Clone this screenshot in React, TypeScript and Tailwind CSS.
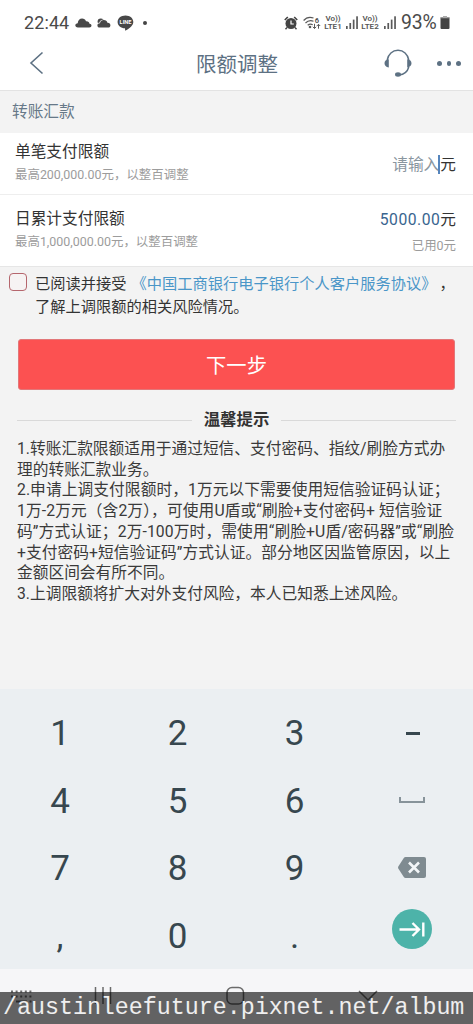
import React from 'react';

const notes = [
  { text: '1.转账汇款限额适用于通过短信、支付密码、指纹/刷脸方式办', spacing: '' },
  { text: '理的转账汇款业务。', spacing: '' },
  { text: '2.申请上调支付限额时，1万元以下需要使用短信验证码认证；', spacing: 'tracking-[0.07px]' },
  { text: '1万-2万元（含2万），可使用U盾或“刷脸+支付密码+ 短信验证', spacing: 'tracking-[0.1px]' },
  { text: '码”方式认证；2万-100万时，需使用“刷脸+U盾/密码器”或“刷脸', spacing: 'tracking-[0.11px]' },
  { text: '+支付密码+短信验证码”方式认证。部分地区因监管原因，以上', spacing: 'tracking-[0.04px]' },
  { text: '金额区间会有所不同。', spacing: '' },
  { text: '3.上调限额将扩大对外支付风险，本人已知悉上述风险。', spacing: '' },
];

function Signal() {
  return (
    <svg className="h-[13px] w-[12px]" viewBox="0 0 12 13" fill="#5a5a5a">
      <rect x="0" y="10" width="1.7" height="3" />
      <rect x="3.4" y="7" width="1.7" height="6" />
      <rect x="6.8" y="3.6" width="1.7" height="9.4" />
      <rect x="10.2" y="0.3" width="1.7" height="12.7" />
    </svg>
  );
}

function VoLte({ n }: { n: number }) {
  return (
    <div className="flex w-[18px] flex-col items-center text-[8px] leading-[8px] font-semibold text-[#555]">
      <span className="whitespace-nowrap">Vo))</span>
      <span className="whitespace-nowrap">LTE{n}</span>
    </div>
  );
}

function StatusBar() {
  return (
    <div className="flex h-[45px] items-center pl-6 text-[#4a4a4a]">
      <span className="w-[46px] text-[18px] leading-none tracking-[0.1px]">22:44</span>
      <svg className="ml-[5px] h-[10px] w-[17px]" viewBox="0 0 17 10" fill="#484848">
        <path d="M3 9.500C1.200 9.500 .300 8.500 .300 7.300C.300 6.100 1.300 5.300 2.700 5.200C3 2.200 4.700 .400 7.100 .400C9 .400 10.400 1.400 11 3.200C13.200 3 14.300 4.200 14.500 5.700C15.800 5.800 16.500 6.600 16.500 7.600C16.500 8.800 15.600 9.500 14.300 9.500Z" />
      </svg>
      <svg className="ml-[5px] h-[10px] w-[14px]" viewBox="0 0 14 10">
        <circle cx="3.800" cy="3.600" r="3.200" fill="#484848" />
        <path d="M2.700 9.500C1.200 9.500 .4 8.600 .4 7.400C.4 6 1.400 5.100 3 5.200C3.300 3.200 4.800 2.100 6.800 2.100C8.800 2.100 10 3.200 10.400 4.800C12.200 4.600 13.400 5.600 13.400 7.200C13.400 8.600 12.500 9.500 11.200 9.500Z" fill="#484848" stroke="#fff" strokeWidth="1.400" paintOrder="stroke" />
      </svg>
      <svg className="ml-[6px] h-[16px] w-[17px]" viewBox="0 0 17 16">
        <path d="M8.500 .4C13 .4 16.300 3.200 16.300 6.900C16.300 10.300 12.800 13 8.600 15.600C7.900 15.900 8.200 14.600 8 13.300C3.900 13.100 .6 10.400 .6 6.900C.6 3.200 4 .4 8.500 .4Z" fill="#484848" />
        <text x="8.500" y="9.200" fill="#fff" fontSize="5.600" fontWeight="700" textAnchor="middle" fontFamily="Roboto, sans-serif">LINE</text>
      </svg>
      <span className="ml-[9px] h-1 w-1 rounded-full bg-[#444]" />

      <svg className="ml-[137px] h-[14px] w-[14px]" viewBox="0 0 14 14">
        <path d="M.8 4L3.800 1M13.200 4L10.200 1" stroke="#444" strokeWidth="1.700" />
        <circle cx="7" cy="7.500" r="5.500" fill="#444" />
        <path d="M3 11.500L1.500 13.200M11 11.500L12.500 13.200" stroke="#444" strokeWidth="1.400" />
        <path d="M7 4.500V8H9.800" fill="none" stroke="#fff" strokeWidth="1.200" />
      </svg>
      <svg className="ml-[5px] h-[14px] w-[18px]" viewBox="0 0 18 14" fill="none" stroke="#5a5a5a" strokeWidth="1.200">
        <path d="M.6 4.500C3.200 1.500 7 .8 10.500 2M2.500 7C4.800 4.600 7.500 4.100 10.500 5.200M4.700 9.300C6.200 7.900 8 7.700 9.700 8.700" />
        <circle cx="7" cy="11" r="1.300" fill="#5a5a5a" stroke="none" />
        <text x="11.800" y="6.500" fill="#4a4a4a" stroke="none" fontSize="7.500" fontWeight="600" fontFamily="Roboto, sans-serif">6</text>
        <path d="M11.500 7.800V12.500M9.800 10.800L11.500 12.500L13.200 10.800M15.500 12.700V8.300M13.800 10L15.500 8.300L17.200 10" strokeWidth="1" />
      </svg>
      <div className="ml-[3px]"><VoLte n={1} /></div>
      <div className="ml-[4px]"><Signal /></div>
      <div className="ml-[3px]"><VoLte n={2} /></div>
      <div className="ml-[5px]"><Signal /></div>
      <span className="ml-[5px] w-[39px] text-[19.400px] leading-none tracking-[-0.2px]">93%</span>
      <svg className="h-[13px] w-[10px]" viewBox="0 0 10 13">
        <path d="M3 0H7V1.300H9Q9.500 1.300 9.500 2V12Q9.500 13 8.500 13H1.500Q.5 13 .5 12V2Q.5 1.300 1 1.300H3Z" fill="#444" />
        <path d="M3 0H7V1.300H9.500V2.200H.5V1.300H3Z" fill="#aaa" />
      </svg>
    </div>
  );
}

function Header() {
  return (
    <div className="flex h-[46px] items-start border-b border-[#e3e3e3] text-[#5d7183]">
      <svg className="ml-[29px] mt-[6px] h-[24px] w-[15px]" viewBox="0 0 15 24" fill="none" stroke="#5d7183" strokeWidth="1.600">
        <path d="M13.500 1.500L2 12L13.500 22.500" />
      </svg>
      <h1 className="ml-[152px] w-[83px] whitespace-nowrap text-[20.5px] leading-[40px]">限额调整</h1>
      <svg className="ml-[105px] mt-[4px] h-[29px] w-[28px]" viewBox="0 0 28 29" fill="none" stroke="#5d7183" strokeWidth="1.500">
        <path d="M3.200 11C4.200 5.200 8.500 1.300 14 1.300C19.500 1.300 23.800 5.200 24.800 11M24.800 18C23.400 23 20 25.500 15 26" />
        <path d="M4.800 10.300V18.400C2 18.200 .5 16.500 .5 14.300C.5 12.200 2 10.500 4.800 10.300ZM23.200 10.300V18.400C26 18.200 27.500 16.500 27.500 14.300C27.500 12.200 26 10.500 23.200 10.300Z" fill="#5d7183" stroke="none" />
        <ellipse cx="14" cy="25.500" rx="3" ry="2.200" fill="#5d7183" stroke="none" />
      </svg>
      <div className="ml-[25px] mt-[16px] flex gap-[5px]">
        <span className="h-[4.500px] w-[4.500px] rounded-full bg-[#5d7183]" />
        <span className="h-[4.500px] w-[4.500px] rounded-full bg-[#5d7183]" />
        <span className="h-[4.500px] w-[4.500px] rounded-full bg-[#5d7183]" />
      </div>
    </div>
  );
}

function LimitRows() {
  return (
    <div className="bg-white text-[#333]">
      <div className="flex h-[62px] justify-between border-b border-[#eee] pl-[15px] pr-[17px]">
        <div className="pt-[8px]">
          <div className="text-[15.7px] leading-[22px]">单笔支付限额</div>
          <div className="mt-[3px] text-[12.450px] leading-[18px] text-[#9c9c9c]">最高200,000.00元，以整百调整</div>
        </div>
        <div className="flex items-center pt-[2px] text-[15.700px]">
          <span className="text-[#8a969f]">请输入</span>
          <span className="-ml-px h-[19px] w-[2px] bg-[#5585bd]" />
          <span>元</span>
        </div>
      </div>
      <div className="flex h-[72px] justify-between border-b border-[#e6e6e6] pl-[15px] pr-[17px]">
        <div className="pt-[13px]">
          <div className="text-[15.7px] leading-[22px]">日累计支付限额</div>
          <div className="mt-[3px] text-[12.450px] leading-[18px] text-[#9c9c9c]">最高1,000,000.00元，以整百调整</div>
        </div>
        <div className="pt-[14px] text-right">
          <div className="text-[15.7px] leading-[22px]">
            <span className="tracking-[0.5px] text-[#39658f]">5000.00</span>元
          </div>
          <div className="mt-[6px] text-[12.450px] leading-[18px] text-[#9c9c9c]">已用0元</div>
        </div>
      </div>
    </div>
  );
}

function Agreement() {
  return (
    <div className="flex h-[72px] pl-[9px] pt-[6px]">
      <span className="h-[18px] w-[18px] rounded-[4px] border border-[#b5666d] bg-[#f6f3f3]" />
      <div className="ml-2 whitespace-nowrap text-[15.250px] leading-[23px] text-[#333]">
        <div className="flex">
          <span>已阅读并接受</span>
          <span className="ml-[5px] text-[#4a96c8]">《中国工商银行电子银行个人客户服务协议》</span>
          <span className="ml-[3px]">，</span>
        </div>
        <div>了解上调限额的相关风险情况。</div>
      </div>
    </div>
  );
}

function Key({ children }: { children: React.ReactNode }) {
  return (
    <button className="flex h-[67.600px] items-center justify-center text-[35px] leading-none text-[#37474f]">
      {children}
    </button>
  );
}

function Keypad() {
  return (
    <div className="grid h-[280px] grid-cols-[118px_117px_117px_1fr] content-start bg-[#ebeff2] pl-px pt-[11px]">
      <Key>1</Key>
      <Key>2</Key>
      <Key>3</Key>
      <Key><span className="mr-px h-[3px] w-[14px] bg-[#37474f]" /></Key>
      <Key>4</Key>
      <Key>5</Key>
      <Key>6</Key>
      <Key><span className="mr-[2px] mb-[3px] h-[6px] w-[26px] border-2 border-t-0 border-[#87939a]" /></Key>
      <Key>7</Key>
      <Key>8</Key>
      <Key>9</Key>
      <Key>
        <svg className="mr-[2px] mb-[2px] h-[21px] w-[28px]" viewBox="0 0 28 21">
          <path d="M7.500 0H26Q28 0 28 2V19Q28 21 26 21H7.500Q6.500 21 5.800 20L.3 11.500Q-.2 10.500 .3 9.500L5.800 1Q6.500 0 7.500 0Z" fill="#7f8b91" />
          <path d="M11 5.500L21 15.500M21 5.500L11 15.500" stroke="#f3f6f8" strokeWidth="2.600" />
        </svg>
      </Key>
      <Key>,</Key>
      <Key>0</Key>
      <Key>.</Key>
      <Key>
        <span className="mr-[2px] mb-[15px] flex h-10 w-10 items-center justify-center rounded-full bg-[#4db3a9]">
          <svg className="h-[15px] w-[26px]" viewBox="0 0 26 15" fill="none" stroke="#fff" strokeWidth="2.400">
            <path d="M.5 7.500H20M13.500 1L20 7.500L13.500 14M24.300 .5V14.500" />
          </svg>
        </span>
      </Key>
    </div>
  );
}

function BottomBar() {
  return (
    <div className="relative h-[55px] bg-[#f6f6f8]">
      <svg className="block h-[55px] w-full" viewBox="0 0 473 55" fill="none" stroke="#6b6b6b" strokeWidth="1.500">
        <path d="M11 22.500H32M11 27.500H32" strokeWidth="2" strokeDasharray="2 2.600" />
        <path d="M11 32.500H13M16 32.500H27M29.500 32.500H31.500" strokeWidth="2" />
        <path d="M95.500 18V35M103 18V35M110.500 18V35" />
        <rect x="227" y="18.500" width="16.500" height="16.500" rx="5" />
        <path d="M359 22L368 31L377 22" />
      </svg>
      {/* translucent address strip over the navigation icons */}
      <div className="absolute inset-x-0 bottom-0 h-8 overflow-hidden whitespace-pre bg-black/60 pl-[3px] font-['Liberation_Mono',monospace] text-[23.300px] leading-[32px] text-white/90">
        /austinleefuture.pixnet.net/album
      </div>
    </div>
  );
}

export default function App() {
  return (
    <div className="flex h-[1024px] w-[473px] flex-col overflow-hidden bg-white font-[Roboto,'Noto_Sans_CJK_SC',sans-serif]">
      <StatusBar />
      <Header />
      <div className="flex flex-1 flex-col bg-[#f3f3f3]">
        <div className="h-[42px] pl-3 text-[15.700px] leading-[42px] text-[#667888]">转账汇款</div>
        <LimitRows />
        <Agreement />
        <button className="mx-[18px] h-[51px] rounded-[3px] border border-[#e27779] bg-[#fc5151] pt-[3px] text-[20.300px] text-white">下一步</button>
        <div className="mx-[17px] mt-[18px] flex h-[24px] items-center">
          <span className="h-px flex-1 bg-[#d9d9d9]" />
          <h2 className="mx-3 pt-px text-[16.400px] font-bold text-[#333]">温馨提示</h2>
          <span className="h-px flex-1 bg-[#d9d9d9]" />
        </div>
        <div className="ml-[17px] mt-[7px] whitespace-nowrap text-[15.720px] leading-[20.700px] text-[#3a3a3a]">
          {notes.map((line) => (
            <div key={line.text} className={line.spacing}>{line.text}</div>
          ))}
        </div>
      </div>
      <Keypad />
      <BottomBar />
    </div>
  );
}
